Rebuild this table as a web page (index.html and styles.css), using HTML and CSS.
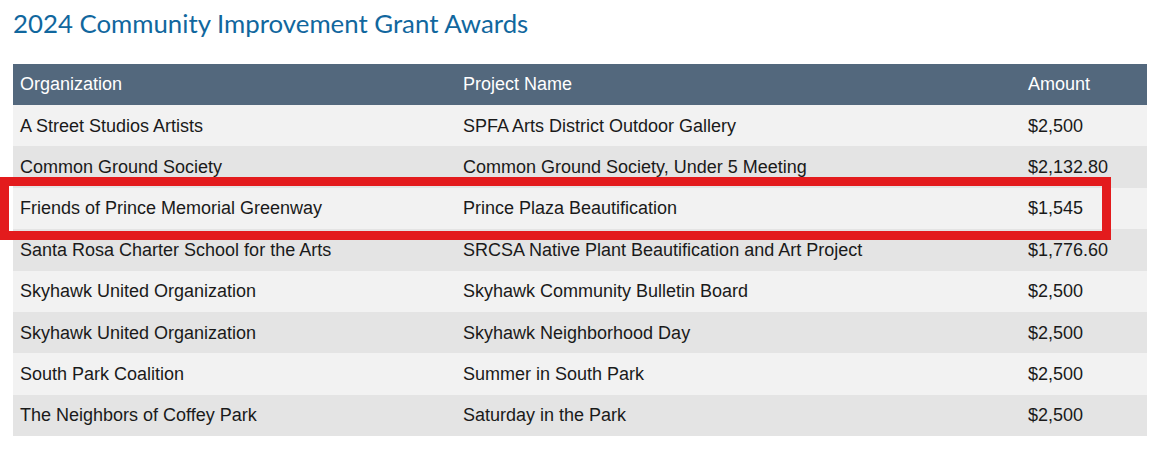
FILE: index.html
```html
<!DOCTYPE html>
<html>
<head>
<meta charset="utf-8">
<link rel="stylesheet" href="styles.css">
</head>
<body>
<div class="page">
  <h1 class="title">2024 Community Improvement Grant Awards</h1>
  <div class="table-wrap">
    <table class="grants">
      <thead>
        <tr><th class="c-org">Organization</th><th class="c-proj">Project Name</th><th class="c-amt">Amount</th></tr>
      </thead>
      <tbody>
        <tr><td>A Street Studios Artists</td><td>SPFA Arts District Outdoor Gallery</td><td>$2,500</td></tr>
        <tr><td>Common Ground Society</td><td>Common Ground Society, Under 5 Meeting</td><td>$2,132.80</td></tr>
        <tr><td>Friends of Prince Memorial Greenway</td><td>Prince Plaza Beautification</td><td>$1,545</td></tr>
        <tr><td>Santa Rosa Charter School for the Arts</td><td>SRCSA Native Plant Beautification and Art Project</td><td>$1,776.60</td></tr>
        <tr><td>Skyhawk United Organization</td><td>Skyhawk Community Bulletin Board</td><td>$2,500</td></tr>
        <tr><td>Skyhawk United Organization</td><td>Skyhawk Neighborhood Day</td><td>$2,500</td></tr>
        <tr><td>South Park Coalition</td><td>Summer in South Park</td><td>$2,500</td></tr>
        <tr><td>The Neighbors of Coffey Park</td><td>Saturday in the Park</td><td>$2,500</td></tr>
      </tbody>
    </table>
    <div class="highlight"></div>
  </div>
</div>
</body>
</html>
```

FILE: styles.css
```css
html, body {
  margin: 0;
  padding: 0;
  background: #ffffff;
}
.page {
  padding: 0 7px 0 13px;
}
.title {
  margin: 0;
  padding-top: 7px;
  height: 64px;
  box-sizing: border-box;
  font-family: Lato, "Open Sans", sans-serif;
  font-weight: 400;
  font-size: 25.8px;
  line-height: 33px;
  color: #11679e;
}
.table-wrap {
  position: relative;
}
.grants {
  width: 1134px;
  border-collapse: collapse;
  font-family: "Liberation Sans", Arial, sans-serif;
  font-size: 18px;
  color: #1a1a1a;
}
.grants th {
  background: #53687d;
  color: #ffffff;
  font-weight: 400;
  text-align: left;
  height: 41px;
  padding: 0 7px;
}
.grants td {
  height: 41.4px;
  padding: 0 7px;
  line-height: 20px;
}
.grants tbody tr:nth-child(odd) { background: #f2f2f2; }
.grants tbody tr:nth-child(even) { background: #e4e4e4; }
.c-org { width: 429px; }
.c-proj { width: 551px; }
.highlight {
  position: absolute;
  left: -13px;
  top: 113px;
  width: 1111px;
  height: 63px;
  box-sizing: border-box;
  border: 9px solid #e31b1d;
  pointer-events: none;
}
```
